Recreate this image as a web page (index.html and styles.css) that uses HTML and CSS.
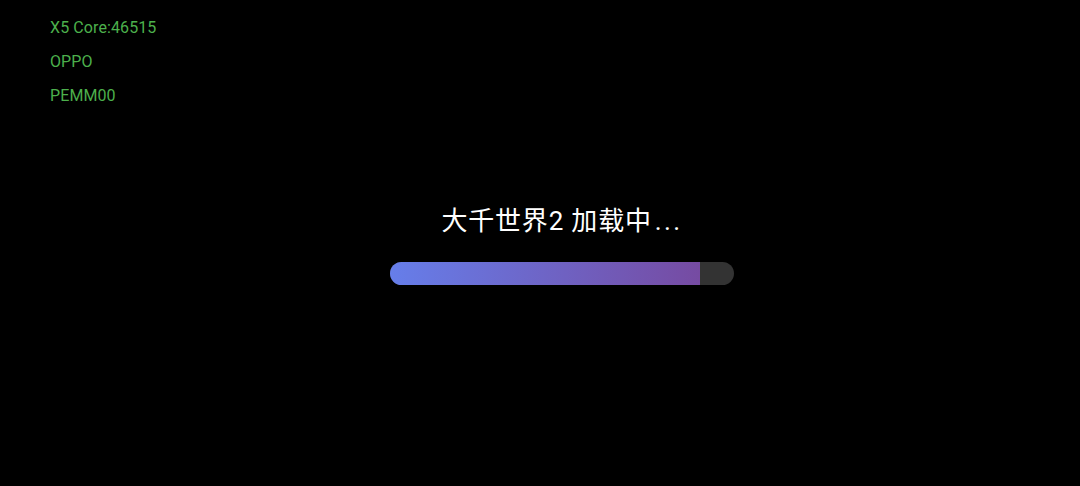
FILE: index.html
```html
<!DOCTYPE html>
<html lang="zh">
<head>
<meta charset="utf-8">
<link rel="stylesheet" href="styles.css">
</head>
<body>
<div class="page">
  <div class="info">
    <div class="info-line">X5 Core:46515</div>
    <div class="info-line">OPPO</div>
    <div class="info-line">PEMM00</div>
  </div>
  <div class="loader">
    <div class="title">大千世界2 加载中<span class="dots">...</span></div>
    <div class="track"><div class="fill" style="width: 90%"></div></div>
  </div>
</div>
</body>
</html>
```
FILE: styles.css
```css
html, body {
  margin: 0;
  padding: 0;
  background: #000;
  width: 1080px;
  height: 486px;
  overflow: hidden;
}
.page {
  position: relative;
  width: 1080px;
  height: 486px;
  font-family: Roboto, "Noto Sans CJK SC", sans-serif;
}
.info {
  position: absolute;
  left: 50px;
  top: 18px;
  display: flex;
  flex-direction: column;
  gap: 14px;
}
.info-line {
  color: #4cb04c;
  font-size: 16px;
  line-height: 20px;
  letter-spacing: 0.1px;
}
.loader {
  display: flex;
  flex-direction: column;
  align-items: center;
  padding-top: 203px;
  padding-left: 44px;
}
.title {
  color: #fff;
  font-size: 26px;
  line-height: 36px;
  letter-spacing: 0.8px;
}
.dots {
  margin-left: 3px;
  letter-spacing: 2.4px;
}
.track {
  margin-top: 23px;
  width: 344px;
  height: 23px;
  border-radius: 12px;
  background: #333;
  overflow: hidden;
}
.fill {
  height: 100%;
  background: linear-gradient(90deg, #667eea, #764ba2);
}
```
